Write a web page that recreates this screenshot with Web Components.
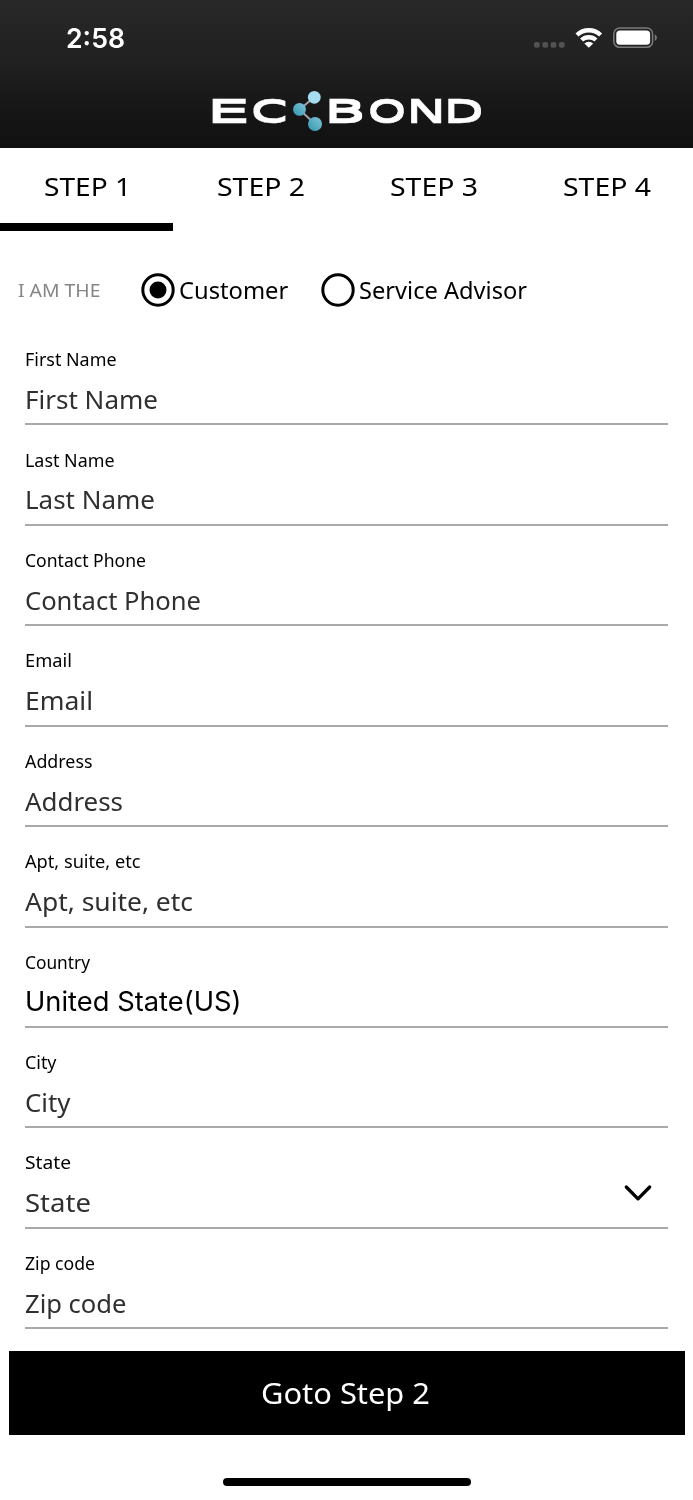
<!DOCTYPE html>
<html lang="en">
<head>
<meta charset="utf-8">
<title>EcoBond</title>
<style>
html,body{margin:0;padding:0;background:#fff}
body{width:693px;height:1500px;overflow:hidden;font-family:"Noto Sans","Open Sans",sans-serif;color:#000}
</style>
</head>
<body>
<bond-app></bond-app>
<script>
const define = (name, html, init) => customElements.define(name, class extends HTMLElement {
  connectedCallback() {
    if (this.shadowRoot) return;
    const root = this.attachShadow({ mode: 'open' });
    const tpl = document.createElement('template');
    tpl.innerHTML = typeof html === 'function' ? html(this) : html;
    root.append(tpl.content.cloneNode(true));
    if (init) init(this, root);
  }
});

// Text run widened so that it spans the width given in "w".
define('fit-text', `<style>:host{display:block;white-space:pre}span{display:inline-block;transform-origin:0 50%}</style><span><slot></slot></span>`, (el, root) => {
  const span = root.querySelector('span');
  const w = +el.getAttribute('w'), natural = span.getBoundingClientRect().width;
  span.style.transform = `scaleX(${(w / natural).toFixed(4)})`;
  span.style.marginRight = (w - natural).toFixed(2) + 'px';
});

define('status-bar', `<style>
:host{display:flex;justify-content:space-between;height:76px;color:#fff}
fit-text{font:600 27px/77px Inter,sans-serif;padding-left:66px}
svg{display:block}
</style>
<fit-text w="59">2:58</fit-text>
<svg width="173" height="76" viewBox="520 0 173 76">
<g fill="#525252"><rect x="534" y="42" width="5.8" height="5.8" rx="2"/><rect x="542.3" y="42" width="5.8" height="5.8" rx="2"/><rect x="550.6" y="42" width="5.8" height="5.8" rx="2"/><rect x="558.9" y="42" width="5.8" height="5.8" rx="2"/></g>
<g fill="none" stroke="#fff" stroke-width="4.4"><path d="M577 35a17.2 17.2 0 0 1 23.6 0"/><path d="M581.6 40a10.6 10.6 0 0 1 14.4 0"/></g>
<path d="M588.8 47.8l-4.4-4.3a6.4 6.4 0 0 1 8.800 0z" fill="#fff"/>
<rect x="613.8" y="28.1" width="38.8" height="19.2" rx="5.8" fill="none" stroke="#7b7b7b" stroke-width="1.5"/>
<rect x="616.3" y="30.6" width="33.8" height="14.2" rx="3.6" fill="#fff"/>
<path d="M654.8 34.6c2.8 1.2 2.8 5.200 0 6.400z" fill="#7b7b7b"/>
</svg>`);

define('brand-logo', `<style>:host{display:block;width:693px;height:71px}svg{display:block}</style>
<svg width="693" height="71" viewBox="0 76 693 71">
<defs><linearGradient id="g" x1="1" y1="0" x2="0" y2="1"><stop offset="0" stop-color="#80c5d9"/><stop offset="1" stop-color="#3297ae"/></linearGradient>
<filter id="heavy" filterUnits="userSpaceOnUse" x="200" y="85" width="300" height="50"><feMorphology operator="dilate" radius="0 1"/></filter></defs>
<g fill="#fff" stroke="#fff" stroke-width=".5" filter="url(#heavy)" font-family="DejaVu Sans" font-size="29.4">
<text y="121.6"><tspan x="206.4" textLength="43.6" lengthAdjust="spacingAndGlyphs">E</tspan><tspan x="251" textLength="36.8" lengthAdjust="spacingAndGlyphs">C</tspan></text>
<text y="121.6"><tspan x="324" textLength="42" lengthAdjust="spacingAndGlyphs">B</tspan><tspan x="368" textLength="38" lengthAdjust="spacingAndGlyphs">O</tspan><tspan x="406.400" textLength="39.400" lengthAdjust="spacingAndGlyphs">N</tspan><tspan x="443.700" textLength="39.800" lengthAdjust="spacingAndGlyphs">D</tspan></text>
</g>
<path d="M314.300 97.300L299.500 109.500L315 124" fill="none" stroke="#a3a3b0" stroke-width="2"/>
<circle cx="314.300" cy="97.300" r="6.400" fill="#a5dcf0"/><circle cx="299.500" cy="109.400" r="6.400" fill="url(#g)"/><circle cx="315" cy="124" r="7" fill="url(#g)"/>
</svg>`);

define('app-header', `<style>:host{display:block;height:147.6px;background:linear-gradient(#282828,#202020 42%,#161616 75%,#111)}</style><status-bar></status-bar><brand-logo></brand-logo>`);

define('step-tab', el => `<style>
:host{display:flex;flex:1;flex-direction:column;align-items:center;height:83px;justify-content:space-between}
fit-text{font-size:26px;line-height:76px;height:74px;padding-left:1.5px}
i{display:block;width:100%;height:8px;background:${el.hasAttribute('active') ? '#000' : 'transparent'}}
</style><fit-text w="${el.getAttribute('w')}">${el.getAttribute('label')}</fit-text><i></i>`);

define('radio-option', el => `<style>
:host{display:flex;align-items:center;gap:3.700px;font-size:24px;line-height:36px}
svg{display:block}
</style><svg width="34" height="34" viewBox="0 0 34 34"><circle cx="17" cy="17" r="15.200" fill="none" stroke="#000" stroke-width="3"/>${el.hasAttribute('checked') ? '<circle cx="17" cy="17" r="8.500"/>' : ''}</svg><fit-text w="${el.getAttribute('w')}">${el.getAttribute('label')}</fit-text>`);

define('role-picker', `<style>
:host{display:flex;align-items:center;height:118px;padding-left:17.500px}
fit-text{font-size:18.3px;color:#868686;width:123.500px}
radio-option+radio-option{margin-left:33px}
</style><fit-text w="82.500">I AM THE</fit-text><radio-option checked label="Customer" w="109.300"></radio-option><radio-option label="Service Advisor" w="168"></radio-option>`);

define('form-field', el => `<style>
:host{display:flex;flex-direction:column;height:100.43px;padding:0 25px 0 24px}
.label{font-size:17.4px;line-height:24px;padding:21.600px 0 0 .5px}
.row{display:flex;justify-content:space-between;height:36px;margin-top:9.800px;padding-left:.8px;color:#303030;font-size:25px;line-height:36px}
.native{color:#000;font:27px/38px Inter,sans-serif}
.line{height:2px;background:#a9a9a9;margin:6.600px 0 0 1px}
svg{display:block;margin:-6px 15.500px 0 0}
</style>
<fit-text class="label" w="${el.getAttribute('lw')}">${el.getAttribute('label')}</fit-text>
<div class="row"><fit-text class="${el.hasAttribute('value') ? 'native' : ''}" w="${el.getAttribute('w')}">${el.getAttribute('value') || el.getAttribute('label')}</fit-text>${el.hasAttribute('menu') ? '<svg width="30" height="30" viewBox="0 0 30 30"><path d="M3.300 9L15 20.800L26.700 9" fill="none" stroke="#000" stroke-width="3.300" stroke-linecap="round" stroke-linejoin="round"/></svg>' : ''}</div>
<div class="line"></div>`);

define('primary-button', el => `<style>
:host{display:flex;justify-content:center;height:84px;margin:23.500px 8.500px 0;background:#000;color:#fff;font-size:28.500px;line-height:84px}
fit-text{margin-left:-2px}
</style><fit-text w="169">${el.getAttribute('label')}</fit-text>`);

define('home-indicator', `<style>:host{display:block;width:248px;height:8.500px;border-radius:5px;background:#000;margin:43px auto 0}</style>`);

define('bond-app', `<style>
:host{display:block;width:693px;height:1500px;background:#fff}
nav{display:flex;height:83.400px}
form{display:block;height:1001.700px;margin-top:-23.500px}
</style>
<app-header></app-header>
<nav><step-tab active label="STEP 1" w="87"></step-tab><step-tab label="STEP 2" w="88"></step-tab><step-tab label="STEP 3" w="88"></step-tab><step-tab label="STEP 4" w="88"></step-tab></nav>
<role-picker></role-picker>
<form>
<form-field label="First Name" lw="91.500" w="133"></form-field>
<form-field label="Last Name" lw="89.500" w="130"></form-field>
<form-field label="Contact Phone" lw="121" w="176"></form-field>
<form-field label="Email" lw="47" w="68"></form-field>
<form-field label="Address" lw="67.500" w="98"></form-field>
<form-field label="Apt, suite, etc" lw="115.500" w="168"></form-field>
<form-field label="Country" value="United State(US)" lw="65" w="216.500"></form-field>
<form-field label="City" lw="31.500" w="45.500"></form-field>
<form-field label="State" menu lw="46" w="66"></form-field>
<form-field label="Zip code" lw="70" w="101.500"></form-field>
</form>
<primary-button label="Goto Step 2"></primary-button>
<home-indicator></home-indicator>`);
</script>
</body>
</html>
